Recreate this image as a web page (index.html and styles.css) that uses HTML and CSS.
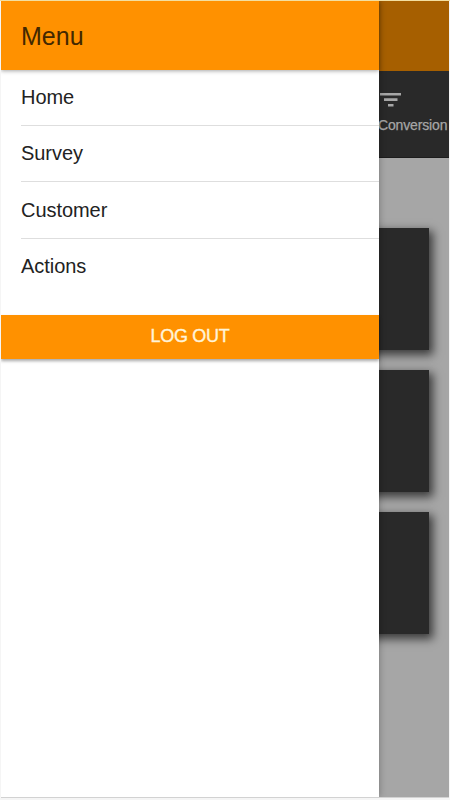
FILE: index.html
```
<!DOCTYPE html>
<html lang="en">
<head>
<meta charset="utf-8">
<title>Menu</title>
<link rel="stylesheet" href="styles.css">
</head>
<body>
<div class="app">
  <main class="page">
    <div class="topbar"></div>
    <div class="tabs">
      <div class="tab">
        <svg class="tab-icon" width="21" height="14" viewBox="0 0 21 14" fill="#a6a6a6"><path d="M0 0h21v2.5H0zM4 5.3h13.500v2.700H4zM8 11h5.500v2.500H8z"/></svg>
        <span class="tab-label">Conversion</span>
      </div>
    </div>
    <div class="cards">
      <div class="card"></div>
      <div class="card"></div>
      <div class="card"></div>
    </div>
  </main>
  <aside class="drawer">
    <header class="drawer-header">Menu</header>
    <nav class="menu">
      <a class="item">Home</a>
      <a class="item">Survey</a>
      <a class="item">Customer</a>
      <a class="item">Actions</a>
    </nav>
    <button class="logout">LOG OUT</button>
  </aside>
</div>
</body>
</html>
```
FILE: styles.css
```
* { box-sizing: border-box; }
body {
  margin: 0;
  height: 800px;
  padding: 1px 1px 0;
  background: #f5f5f5;
  font-family: "Liberation Sans", Arial, sans-serif;
  box-shadow: inset 0 1px #f3dfa0;
  overflow: hidden;
}
.app {
  position: relative;
  height: 797px;
  border-bottom: 1px solid #d2d2d2;
  overflow: hidden;
}
.page { height: 100%; background: #a6a6a6; }
.topbar { height: 70px; background: #a65f00; }
.tabs {
  height: 87px;
  display: flex;
  justify-content: flex-end;
  background: #292929;
  border-bottom: 1px solid #1c1c1c;
}
.tab {
  width: 71px;
  padding-top: 22px;
  display: flex;
  flex-direction: column;
}
.tab-icon { margin-left: 2px; }
.tab-label {
  margin-top: 10px;
  font-size: 14px;
  line-height: 17px;
  letter-spacing: -0.15px;
  color: #a6a6a6;
  -webkit-text-stroke: 0.25px #a6a6a6;
}
.cards {
  display: flex;
  flex-direction: column;
  gap: 20px;
  padding: 70px 20px 0;
}
.card {
  height: 122px;
  background: #292929;
  box-shadow: 3px 4px 9px 1px rgba(0, 0, 0, 0.65);
}
.drawer {
  position: absolute;
  top: 0;
  left: 0;
  bottom: 0;
  width: 378px;
  background: #fff;
  box-shadow: 0 0 7px rgba(0, 0, 0, 0.3);
}
.drawer-header {
  height: 69px;
  padding-left: 20px;
  font-size: 25px;
  line-height: 70px;
  color: #422800;
  background: #ff9100;
  box-shadow: 0 1px 4px rgba(0, 0, 0, 0.35);
}
.menu { padding: 0 0 22px 20px; }
.item {
  display: block;
  height: 56.2px;
  border-bottom: 1px solid #dedede;
  font-size: 20px;
  letter-spacing: -0.05px;
  line-height: 54px;
  color: #222;
}
.item:nth-child(3) { line-height: 56px; }
.item:last-child { height: 54.4px; border-bottom: 0; }
.logout {
  display: block;
  width: 100%;
  height: 44px;
  border: 0;
  padding: 0 0 2px;
  background: #ff9100;
  color: #fff4d8;
  font: 500 18px/42px "Liberation Sans", Arial, sans-serif;
  letter-spacing: -0.3px;
  -webkit-text-stroke: 0.4px #fff4d8;
  box-shadow: 0 2px 3px rgba(0, 0, 0, 0.35);
}
```
